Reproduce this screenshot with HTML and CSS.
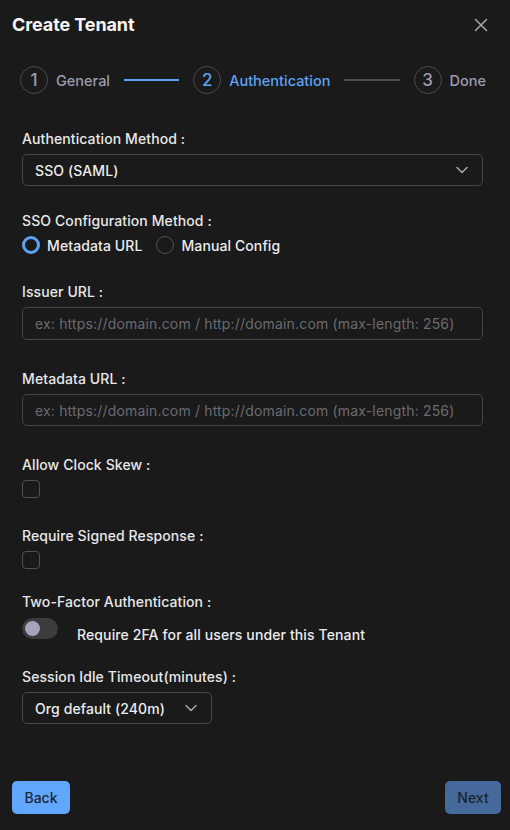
FILE: index.html
```html
<!DOCTYPE html>
<html>
<head>
<meta charset="utf-8">
<link rel="stylesheet" href="styles.css">
</head>
<body>
<div class="modal">
  <div class="header">
    <h1 class="title">Create Tenant</h1>
    <svg class="close" width="14" height="14" viewBox="0 0 14 14"><path d="M1.5 1.5 L12.5 12.5 M12.5 1.5 L1.5 12.5" stroke="#a3a2b2" stroke-width="1.6" stroke-linecap="round"/></svg>
  </div>
  <div class="stepper">
    <div class="step"><span class="num">1</span><span class="step-label">General</span></div>
    <div class="line line-done"></div>
    <div class="step step-active"><span class="num">2</span><span class="step-label">Authentication</span></div>
    <div class="line"></div>
    <div class="step"><span class="num">3</span><span class="step-label">Done</span></div>
  </div>
  <div class="form">
    <div class="field f-auth">
      <label class="label">Authentication Method :</label>
      <div class="select select-full"><span>SSO (SAML)</span>
        <svg width="14" height="14" viewBox="0 0 14 14"><path d="M2 4.5 L7 9.5 L12 4.5" fill="none" stroke="#a8a8b4" stroke-width="1.5" stroke-linecap="round" stroke-linejoin="round"/></svg>
      </div>
    </div>
    <div class="field f-sso">
      <label class="label">SSO Configuration Method :</label>
      <div class="radios">
        <span class="radio-item"><span class="radio radio-on"></span>Metadata URL</span>
        <span class="radio-item"><span class="radio"></span>Manual Config</span>
      </div>
    </div>
    <div class="field f-issuer">
      <label class="label">Issuer URL :</label>
      <input class="input" placeholder="ex: https://domain.com / http://domain.com (max-length: 256)">
    </div>
    <div class="field f-meta">
      <label class="label">Metadata URL :</label>
      <input class="input input-meta" placeholder="ex: https://domain.com / http://domain.com (max-length: 256)">
    </div>
    <div class="field f-skew">
      <label class="label">Allow Clock Skew :</label>
      <span class="checkbox"></span>
    </div>
    <div class="field f-signed">
      <label class="label">Require Signed Response :</label>
      <span class="checkbox"></span>
    </div>
    <div class="field f-2fa">
      <label class="label">Two-Factor Authentication :</label>
      <div class="toggle-row">
        <span class="toggle"><span class="knob"></span></span>
        <span class="toggle-text">Require 2FA for all users under this Tenant</span>
      </div>
    </div>
    <div class="field f-session">
      <label class="label">Session Idle Timeout(minutes) :</label>
      <div class="select select-small"><span>Org default (240m)</span>
        <svg width="14" height="14" viewBox="0 0 14 14"><path d="M2 4.5 L7 9.5 L12 4.5" fill="none" stroke="#a8a8b4" stroke-width="1.5" stroke-linecap="round" stroke-linejoin="round"/></svg>
      </div>
    </div>
  </div>
  <div class="footer">
    <button class="btn btn-back">Back</button>
    <button class="btn btn-next">Next</button>
  </div>
</div>
</body>
</html>
```

FILE: styles.css
```css
* { box-sizing: border-box; }
html, body {
  margin: 0;
  padding: 0;
  background: #1a1a1a;
}
body {
  font-family: Inter, "Noto Sans", sans-serif;
  color: #e6e6e8;
  width: 510px;
  height: 830px;
  overflow: hidden;
}
.modal {
  display: flex;
  flex-direction: column;
  height: 830px;
}
.header {
  display: flex;
  align-items: center;
  justify-content: space-between;
  padding: 14px 22px 0 12px;
  height: 36px;
}
.title {
  margin: 0;
  font-size: 18px;
  font-weight: 700;
  color: #f5f5f5;
  line-height: 22px;
  letter-spacing: -0.1px;
}

.stepper {
  display: flex;
  align-items: center;
  padding: 30px 24px 0 20px;
  height: 58px;
}
.step {
  display: flex;
  align-items: center;
  gap: 8px;
  color: #9d9cae;
  font-size: 14.5px;
  font-weight: 500;
}
.num {
  width: 28px;
  height: 28px;
  border: 1px solid #4a4a4f;
  border-radius: 50%;
  display: flex;
  align-items: center;
  justify-content: center;
  font-size: 17px;
  font-weight: 500;
  color: #9d9cae;
}
.step-active .num,
.step-active .step-label { color: #5ea2f5; }
.line {
  flex: 1;
  height: 2px;
  background: #4d4d50;
  margin: 0 14px;
}
.line-done { background: #5ea2f5; }

.form {
  display: flex;
  flex-direction: column;
  padding: 0 27px 0 22px;
}
.field {
  display: flex;
  flex-direction: column;
  align-items: flex-start;
}
.label {
  font-size: 14px;
  font-weight: 500;
  line-height: 20px;
  color: #e8e8ea;
  letter-spacing: 0.1px;
}
.f-auth { margin-top: 35px; }
.f-sso { margin-top: 25px; }
.f-issuer { margin-top: 27px; }
.f-meta { margin-top: 29px; }
.f-skew { margin-top: 29px; }
.f-signed { margin-top: 28px; }
.f-2fa { margin-top: 23px; }
.f-session { margin-top: 22px; }

.select {
  margin-top: 5px;
  height: 32px;
  border: 1px solid #47474b;
  border-radius: 5px;
  display: flex;
  align-items: center;
  justify-content: space-between;
  padding: 0 13px 0 12px;
  font-size: 14px;
  font-weight: 500;
  color: #ececee;
  letter-spacing: 0.1px;
}
.select-full { width: 100%; }
.select-small { width: 190px; }

.radios {
  display: flex;
  align-items: center;
  margin-top: 4px;
  height: 20px;
  gap: 14px;
}
.radio-item {
  display: flex;
  align-items: center;
  gap: 7px;
  font-size: 14px;
  font-weight: 500;
  color: #ececee;
  letter-spacing: 0.1px;
}
.radio {
  width: 18px;
  height: 18px;
  border-radius: 50%;
  border: 1px solid #505055;
}
.radio-on { border: 3.5px solid #5ea2f5; }

.input {
  margin-top: 5px;
  width: 100%;
  height: 33px;
  background: transparent;
  border: 1px solid #444448;
  border-radius: 5px;
  padding: 0 12px;
  font-family: Inter, "Noto Sans", sans-serif;
  font-size: 14px;
  letter-spacing: 0.17px;
  color: #ececee;
  outline: none;
}
.input-meta { height: 32px; }
.input::placeholder { color: #6a6a70; }

.checkbox {
  margin-top: 5px;
  width: 18px;
  height: 18px;
  border: 1px solid #505055;
  border-radius: 4px;
}

.toggle-row {
  display: flex;
  align-items: flex-start;
  margin-top: 6px;
  gap: 19px;
}
.toggle {
  width: 36px;
  height: 21px;
  border-radius: 11px;
  background: #3c3c3f;
  display: flex;
  align-items: center;
  padding-left: 3px;
}
.knob {
  width: 15px;
  height: 15px;
  border-radius: 50%;
  background: #a6a3ba;
}
.toggle-text {
  margin-top: 7px;
  font-size: 14px;
  font-weight: 500;
  line-height: 20px;
  color: #ececee;
  letter-spacing: 0.12px;
}

.footer {
  margin-top: auto;
  display: flex;
  justify-content: space-between;
  padding: 0 9px 16px 12px;
}
.btn {
  height: 33px;
  border: none;
  border-radius: 5px;
  font-family: Inter, "Noto Sans", sans-serif;
  font-size: 14px;
  font-weight: 500;
  color: #1d2533;
  padding: 0 12px;
}
.btn-back { background: #62a7ff; width: 58px; }
.btn-next { background: #44699a; width: 56px; }
```
